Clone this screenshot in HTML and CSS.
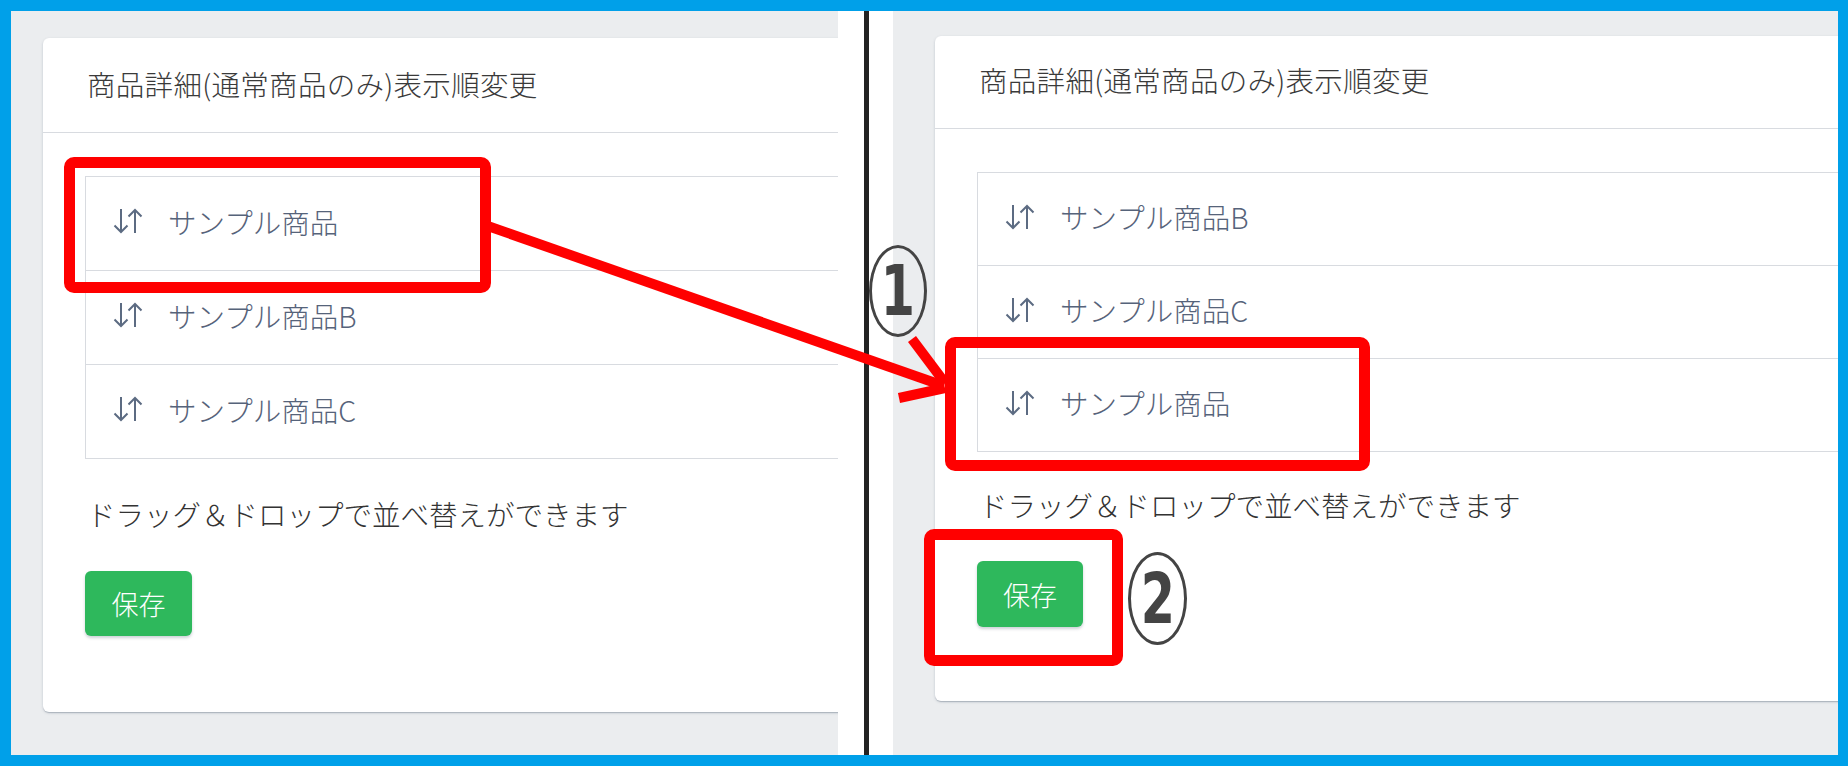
FILE: index.html
```html
<!DOCTYPE html>
<html lang="ja">
<head>
    <meta charset="UTF-8">
    <title>商品詳細 表示順変更</title>
    <link rel="stylesheet" href="styles.css">
</head>
<body>
<div class="page">
    <div class="frame">

        <!-- before -->
        <div class="shot">
            <div class="card">
                <div class="card-header">商品詳細(通常商品のみ)表示順変更</div>
                <div class="card-body">
                    <ul class="sort-list">
                        <li class="sort-item">
                            <svg class="sort-icon" viewBox="0 0 30 26"><path d="M8 1V24M1.5 17.5L8 24L14.5 17.5M22 2V25M15.5 8.5L22 2L28.5 8.5"/></svg>
                            <span>サンプル商品</span>
                        </li>
                        <li class="sort-item">
                            <svg class="sort-icon" viewBox="0 0 30 26"><path d="M8 1V24M1.5 17.5L8 24L14.5 17.5M22 2V25M15.5 8.5L22 2L28.5 8.5"/></svg>
                            <span>サンプル商品B</span>
                        </li>
                        <li class="sort-item">
                            <svg class="sort-icon" viewBox="0 0 30 26"><path d="M8 1V24M1.5 17.5L8 24L14.5 17.5M22 2V25M15.5 8.5L22 2L28.5 8.5"/></svg>
                            <span>サンプル商品C</span>
                        </li>
                    </ul>
                    <p class="hint">ドラッグ＆ドロップで並べ替えができます</p>
                    <button class="btn-save">保存</button>
                </div>
            </div>
        </div>

        <div class="divider"></div>

        <!-- after -->
        <div class="shot shot-after">
            <div class="card">
                <div class="card-header">商品詳細(通常商品のみ)表示順変更</div>
                <div class="card-body">
                    <ul class="sort-list">
                        <li class="sort-item">
                            <svg class="sort-icon" viewBox="0 0 30 26"><path d="M8 1V24M1.5 17.5L8 24L14.5 17.5M22 2V25M15.5 8.5L22 2L28.5 8.5"/></svg>
                            <span>サンプル商品B</span>
                        </li>
                        <li class="sort-item">
                            <svg class="sort-icon" viewBox="0 0 30 26"><path d="M8 1V24M1.5 17.5L8 24L14.5 17.5M22 2V25M15.5 8.5L22 2L28.5 8.5"/></svg>
                            <span>サンプル商品C</span>
                        </li>
                        <li class="sort-item">
                            <svg class="sort-icon" viewBox="0 0 30 26"><path d="M8 1V24M1.5 17.5L8 24L14.5 17.5M22 2V25M15.5 8.5L22 2L28.5 8.5"/></svg>
                            <span>サンプル商品</span>
                        </li>
                    </ul>
                    <p class="hint">ドラッグ＆ドロップで並べ替えができます</p>
                    <button class="btn-save">保存</button>
                </div>
            </div>
        </div>
    </div>

    <!-- annotations -->
    <div class="mark mark-from"></div>
    <div class="mark mark-to"></div>
    <div class="mark mark-save"></div>

    <svg class="arrow" viewBox="0 0 1848 766">
        <line x1="482" y1="224" x2="944" y2="386"/>
        <line x1="912" y1="339" x2="945" y2="383"/>
        <line x1="899" y1="398" x2="945" y2="388"/>
    </svg>

    <div class="step step-1"><span>1</span></div>
    <div class="step step-2"><span>2</span></div>
</div>
</body>
</html>
```

FILE: styles.css
```css
body {
    margin: 0;
    font-family: "Noto Sans CJK JP", sans-serif;
    font-weight: 300;
    background-color: #fff;
}

.page {
    position: relative;
    width: 1848px;
    height: 766px;
    overflow: hidden;
}

.frame {
    display: flex;
    height: 766px;
    box-sizing: border-box;
    border: 11px solid #00a0e9;
    border-right-width: 10px;
    background-color: #fff;
}

.shot {
    width: 827px;
    flex-shrink: 0;
    background-color: #ebedef;
    overflow: hidden;
    padding: 27px 0 0 32px;
    box-sizing: border-box;
}

.shot-after {
    flex: 1;
    width: auto;
    padding: 25px 0 0 42px;
}

.divider {
    width: 5px;
    margin: 0 24px 0 26px;
    background-color: #222;
}

.card {
    width: 1000px;
    background-color: #fff;
    border-radius: 6px;
    box-shadow: 0 1px 1px 0 rgba(60, 75, 100, 0.14), 0 2px 1px -1px rgba(60, 75, 100, 0.12), 0 1px 3px 0 rgba(60, 75, 100, 0.2);
}

.card-header {
    padding: 26px 44px 28px;
    font-size: 28.5px;
    line-height: 40px;
    letter-spacing: 0.3px;
    color: #3a3a3a;
    border-bottom: 1px solid #d8dbe0;
}

.card-body {
    padding: 43px 0 76px 42px;
}

.sort-list {
    list-style: none;
    margin: 0;
    padding: 0;
    border: 1px solid #d8dbe0;
}

.sort-item {
    display: flex;
    align-items: center;
    height: 94px;
    padding: 0 0 5px 27px;
    box-sizing: border-box;
    font-size: 28.5px;
    color: #56637a;
    border-top: 1px solid #d8dbe0;
}

.sort-item:first-child {
    border-top: none;
    height: 93px;
}

.sort-icon {
    width: 30px;
    height: 26px;
    margin-right: 25px;
    fill: none;
    stroke: #5c6b82;
    stroke-width: 2;
}

.hint {
    margin: 35px 0 0 2px;
    font-size: 28.5px;
    line-height: 40px;
    color: #333;
}

.btn-save {
    margin-top: 37px;
    width: 107px;
    height: 65px;
    border: none;
    border-radius: 6px;
    background-color: #2eb85c;
    color: #fff;
    font-family: "Noto Sans CJK JP", sans-serif;
    font-weight: 300;
    font-size: 27px;
    box-shadow: 0 2px 3px rgba(60, 75, 100, 0.25);
}

/* after: captured a touch smaller */
.shot-after .card-header {
    padding: 24px 44px 28px;
}

.shot-after .sort-item {
    height: 93px;
}

.shot-after .sort-item:first-child {
    height: 92px;
}

.shot-after .hint {
    margin-top: 33px;
}

.shot-after .btn-save {
    margin-top: 36px;
    width: 106px;
    height: 66px;
}

.shot-after .card-body {
    padding-bottom: 74px;
}

/* annotations */
.mark {
    position: absolute;
    box-sizing: border-box;
    border: 11px solid #ff0000;
    border-radius: 10px;
}

.mark-from {
    left: 64px;
    top: 157px;
    width: 427px;
    height: 136px;
}

.mark-to {
    left: 945px;
    top: 337px;
    width: 425px;
    height: 134px;
}

.mark-save {
    left: 924px;
    top: 529px;
    width: 199px;
    height: 137px;
}

.arrow {
    position: absolute;
    left: 0;
    top: 0;
    width: 1848px;
    height: 766px;
    stroke: #ff0000;
    stroke-width: 10;
}

.step {
    position: absolute;
    box-sizing: border-box;
    display: flex;
    align-items: center;
    justify-content: center;
    border: 3px solid #444;
    border-radius: 50%;
    font-family: "DejaVu Sans", sans-serif;
    font-stretch: condensed;
    font-weight: bold;
    font-size: 70px;
    line-height: 1;
    color: #444;
}

.step span {
    display: inline-block;
    transform: scaleX(0.78);
}

.step-1 {
    left: 869px;
    top: 245px;
    width: 58px;
    height: 92px;
}

.step-2 {
    left: 1128px;
    top: 552px;
    width: 59px;
    height: 93px;
}
```
